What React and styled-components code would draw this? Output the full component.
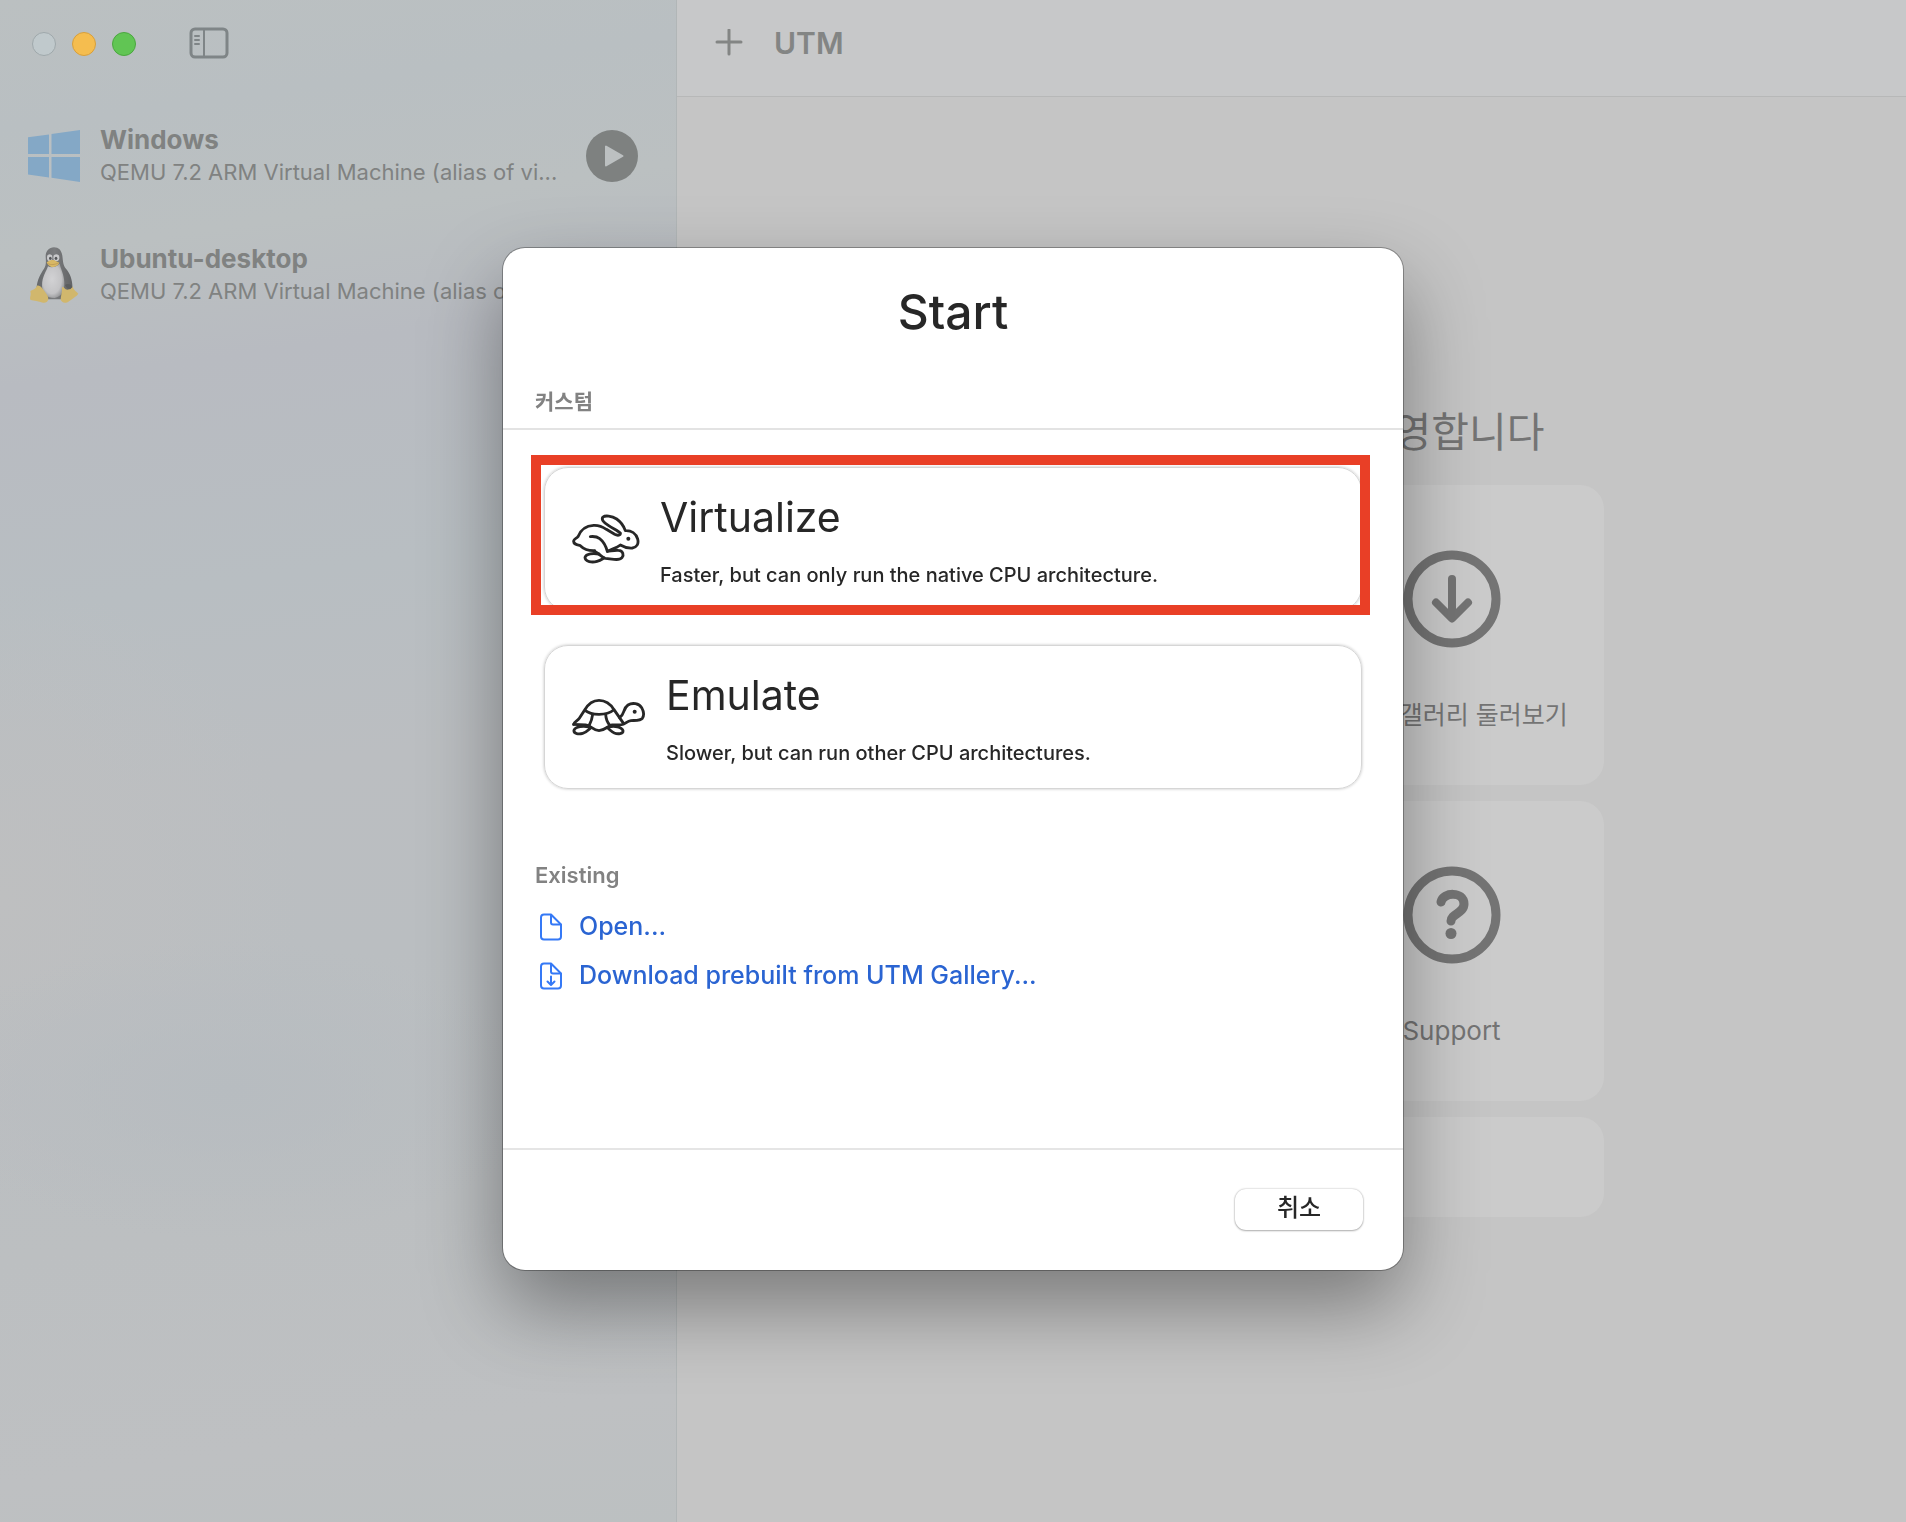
import React, { Component } from 'react';
import styled, { createGlobalStyle } from 'styled-components';


const GlobalStyle = createGlobalStyle`
    *{
        box-sizing: border-box;
        margin: 0;
        padding: 0;
    }
    body{
        font-family: Inter, "Noto Sans CJK KR", sans-serif;
        background-color: #c5c5c5;
    }
    button{
        font-family: inherit;
        border: none;
        background: none;
        cursor: pointer;
    }
    ul{
        list-style: none;
    }
    svg{
        display: block;
        flex-shrink: 0;
    }
`;

const StyledWindow = styled.div`
    display: flex;
    min-height: 100vh;
`;

const StyledSidebar = styled.aside`
    width: 677px;
    flex-shrink: 0;
    border-right: 1px solid #b1b6b7;
    background:
        radial-gradient(ellipse 320px 150px at 230px 1090px, #b7bcc0 0%, transparent 100%),
        radial-gradient(ellipse 300px 320px at 0 900px, #bebfc0 0%, transparent 100%),
        linear-gradient(172deg, #bbc0c1 0%, #b9bfc2 8%, #bbc0c1 16%, #b8bbc1 24%, #b8bec2 38%, #bbbec1 50%, #babec1 62%, #bcbfc1 78%, #bec0c2 92%, #bcc0c1 100%);
`;

const StyledTitleBar = styled.div`
    display: flex;
    align-items: center;
    height: 88px;
    padding: 0 32px;
    .lights{
        display: flex;
        gap: 16px;
        margin-right: 53px;
    }
`;

const Light = styled.button`
    width: 24px;
    height: 24px;
    border-radius: 50%;
    border: 1px solid ${({ $edge }) => $edge};
    background-color: ${({ $fill }) => $fill};
`;

const StyledMachines = styled.ul`
    display: flex;
    flex-direction: column;
    gap: 55px;
    padding: 36px 38px 36px 28px;
    li{
        display: flex;
        align-items: center;
        gap: 20px;
        color: #808281;
    }
    .logo{
        display: flex;
        justify-content: center;
        width: 52px;
        flex-shrink: 0;
    }
    .info{
        flex: 1;
        min-width: 0;
    }
    h3, p{
        line-height: 32px;
        white-space: nowrap;
    }
    h3{
        font-size: 26px;
        font-weight: 700;
    }
    p{
        font-size: 22px;
    }
`;

const StyledMain = styled.main`
    flex: 1;
    min-width: 0;
    display: flex;
    flex-direction: column;
    background-color: #c5c5c5;
`;

const StyledToolbar = styled.header`
    display: flex;
    align-items: center;
    gap: 31px;
    height: 97px;
    padding: 0 38px 11px;
    color: #838584;
    background-color: #c7c8c9;
    border-bottom: 1px solid #b7b8b8;
    h1{
        font-size: 30px;
        line-height: 36px;
        font-weight: 600;
    }
`;

const StyledWelcome = styled.section`
    flex: 1;
    display: flex;
    flex-direction: column;
    align-items: center;
    justify-content: center;
    color: #747474;
    h2{
        font-size: 41px;
        line-height: 60px;
        font-weight: 400;
        margin-bottom: 23px;
    }
    .tiles{
        display: grid;
        grid-template-columns: 304px 304px;
        gap: 16px;
    }
`;

const Tile = styled.div`
    grid-column: ${({ $wide }) => $wide ? "1 / -1" : "auto"};
    height: ${({ $wide }) => $wide ? "100px" : "300px"};
    display: flex;
    flex-direction: column;
    align-items: center;
    gap: 49px;
    padding-top: 65px;
    border-radius: 24px;
    background-color: #cbcbcb;
    button{
        font-size: ${({ $korean }) => $korean ? "25px" : "26px"};
        line-height: 36px;
        color: inherit;
    }
`;

const StyledBackdrop = styled.div`
    position: fixed;
    inset: 0;
    display: flex;
    align-items: flex-start;
    justify-content: center;
    padding-top: 248px;
`;

const StyledDialog = styled.div`
    width: 900px;
    max-width: 100%;
    color: #272727;
    background-color: #fff;
    border-radius: 22px;
    box-shadow: 0 0 0 1px rgba(0, 0, 0, 0.3), 0 36px 80px rgba(0, 0, 0, 0.38);
    h2{
        padding-top: 34px;
        font-size: 48px;
        line-height: 60px;
        font-weight: 500;
        text-align: center;
    }
    .custom{
        margin-top: 46px;
        padding: 0 32px 12px;
        border-bottom: 2px solid #e3e3e3;
    }
    .modes{
        display: flex;
        flex-direction: column;
        gap: 34px;
        padding: 37px 41px 36px;
    }
    .existing{
        padding: 36px 32px 148px;
    }
    .existing ul{
        margin-top: 13px;
    }
    footer{
        display: flex;
        justify-content: flex-end;
        padding: 39px 40px 40px;
        border-top: 2px solid #e5e5e5;
    }
`;

const SectionTitle = styled.h3`
    font-size: ${({ $korean }) => $korean ? "21px" : "22px"};
    line-height: 28px;
    font-weight: 600;
    color: #828282;
`;

const ModeCard = styled.button`
    position: relative;
    display: flex;
    align-items: center;
    gap: 20px;
    width: 100%;
    height: 144px;
    padding: 0 27px;
    border: 1px solid #d6d6d6;
    border-radius: 24px;
    box-shadow: 0 0 3px rgba(0, 0, 0, 0.25);
    color: inherit;
    text-align: left;
    strong, small{
        display: block;
    }
    strong{
        font-size: 41px;
        line-height: 54px;
        font-weight: 400;
        margin-bottom: 17px;
    }
    small{
        font-size: 20px;
        line-height: 28px;
        font-weight: 500;
    }
    &::after{
        content: "";
        display: ${({ $marked }) => $marked ? "block" : "none"};
        position: absolute;
        inset: -13px -9px -5px -14px;
        border: 10px solid #e93f26;
    }
`;

const ExistingLink = styled.a`
    display: flex;
    align-items: center;
    gap: 16px;
    padding-left: 4px;
    font-size: 25px;
    line-height: 49px;
    font-weight: 500;
    color: #2a64d2;
    text-decoration: none;
`;

const CancelButton = styled.button`
    width: 128px;
    height: 41px;
    padding-bottom: 4px;
    border-radius: 11px;
    font-size: 24px;
    line-height: 36px;
    font-weight: 500;
    color: #272727;
    background-color: #fff;
    box-shadow: 0 0 2px rgba(0, 0, 0, 0.3), 0 1px 2px rgba(0, 0, 0, 0.25);
`;

const SidebarIcon = () => (
    <svg width="40" height="34" viewBox="0 0 40 34" fill="none" stroke="#7f8587" strokeWidth="3" strokeLinecap="round">
        <rect x="2" y="2" width="36" height="28" rx="4" />
        <path d="M15 2V30" strokeWidth="2" />
        <path d="M6 9H10M6 13H10M6 17H10" strokeWidth="2" />
    </svg>
);

const PlusIcon = () => (
    <svg width="28" height="28" viewBox="0 0 28 28" fill="none" stroke="#838584" strokeWidth="3" strokeLinecap="round">
        <path d="M14 1V25M2 13H26" />
    </svg>
);

const WindowsLogo = () => (
    <svg width="52" height="52" viewBox="0 0 52 52" fill="#84a8c6">
        <path d="M0 7.2L21 4.4V24H0zM23.5 4L52 0V24H23.5zM0 27H21V47.4L0 44.6zM23.5 27H52V52L23.5 47.8z" />
    </svg>
);

const TuxLogo = () => (
    <svg width="50" height="57" viewBox="27 50 150 171">
        <defs>
            <radialGradient id="belly" cx="45%" cy="45%" r="60%">
                <stop offset="0" stopColor="#d2d2d4" />
                <stop offset="0.7" stopColor="#c3c3c5" />
                <stop offset="1" stopColor="#929395" />
            </radialGradient>
            <linearGradient id="coat" x1="0" y1="0" x2="1" y2="0">
                <stop offset="0" stopColor="#66686a" />
                <stop offset="0.5" stopColor="#7a7c7e" />
                <stop offset="1" stopColor="#626365" />
            </linearGradient>
        </defs>
        <path fill="url(#coat)" d="M102 51C87 51 77 62 77 78C78 95 79 103 72 115C61 132 52 148 50 170L68 207H132L157 178C159 151 151 131 138 115C129 105 129 91 127 76C124 59 116 51 102 51Z" />
        <path fill="url(#belly)" d="M84 108C94 114 109 110 119 100C122 116 132 131 133 156C134 183 124 200 104 203C80 203 67 189 66 166C66 139 79 124 84 108Z" />
        <ellipse cx="89" cy="82" rx="8" ry="10" fill="#c8c9cb" />
        <ellipse cx="109" cy="82" rx="9" ry="10" fill="#c8c9cb" />
        <ellipse cx="91" cy="84" rx="4" ry="5" fill="#55575a" />
        <ellipse cx="108" cy="84" rx="4" ry="5" fill="#55575a" />
        <path fill="#d8b865" d="M80 96C88 89 96 87 103 90L118 97C116 105 102 112 94 110C87 107 82 103 80 96Z" />
        <path fill="none" stroke="#b69351" strokeWidth="2" d="M82 99C94 105 103 103 116 98" />
        <path fill="#d1b76d" d="M51 166C61 163 70 178 79 190C90 204 85 219 69 217C55 214 42 210 32 209C27 203 35 193 31 184C32 177 45 181 51 166Z" />
        <path fill="#d1b76d" d="M126 171C133 165 132 182 148 177C155 176 153 169 158 169C162 181 172 185 175 190C170 199 157 204 147 213C137 221 124 218 122 207C123 194 127 183 126 171Z" />
        <path fill="#5b5d5f" d="M135 164C143 158 154 161 157 171C149 179 141 177 135 164Z" />
    </svg>
);

const PlayIcon = () => (
    <svg width="52" height="52" viewBox="0 0 52 52">
        <circle cx="26" cy="26" r="26" fill="#7e8180" />
        <path d="M20 16.5V35.5L36.5 26z" fill="#bcc0c1" stroke="#bcc0c1" strokeWidth="2" strokeLinejoin="round" />
    </svg>
);

const DownloadCircle = () => (
    <svg width="98" height="98" viewBox="0 0 98 98" fill="none" stroke="#747474" strokeWidth="9" strokeLinecap="round" strokeLinejoin="round">
        <circle cx="49" cy="49" r="44" />
        <path d="M49 29V68M33 52.5L49 68.5L65 52.5" strokeWidth="8" />
    </svg>
);

const HelpCircle = () => (
    <svg width="98" height="98" viewBox="0 0 98 98" fill="none" stroke="#747474" strokeWidth="9" strokeLinecap="round" strokeLinejoin="round">
        <circle cx="49" cy="49" r="44" />
        <path d="M38 36C40 26 61 25 61 38C61 47 48 48 48 55" />
        <circle cx="48" cy="67.5" r="5.5" fill="#747474" stroke="none" />
    </svg>
);

const RabbitIcon = () => (
    <svg width="68" height="50" viewBox="62 72 204 150" fill="none" stroke="#272727" strokeWidth="8.5" strokeLinecap="round" strokeLinejoin="round">
        <path d="M130 182C112 183 98 178 87 167C76 164 66 162 67 153C68 146 75 146 80 140C88 119 105 107 127 106C144 105 155 111 165 118L190 133C199 138 209 136 207 129C201 124 186 116 172 107C156 97 149 88 155 81C161 76 181 77 196 87C210 97 218 110 222 122C240 121 254 131 259 147C263 162 256 172 243 174C229 175 217 171 207 165C196 174 183 176 168 184C164 170 157 155 145 146C136 139 126 139 117 140" />
        <path d="M168 184C179 183 190 180 201 181C216 182 218 196 212 203C206 210 197 209 188 208L162 205C151 203 143 190 130 184" />
        <path d="M143 192C127 189 104 190 101 202C101 216 123 218 137 214C147 211 151 208 158 204" />
        <circle cx="231" cy="146" r="6" fill="#272727" stroke="none" />
    </svg>
);

const TurtleIcon = () => (
    <svg width="74" height="38" viewBox="62 84 222 114" fill="none" stroke="#272727" strokeWidth="8.5" strokeLinecap="round" strokeLinejoin="round">
        <path d="M67 163C68 156 79 153 84 145L100 120C111 101 126 91 143 91C160 91 177 101 188 119L217 161" />
        <path d="M101 121C121 137 166 137 187 120" />
        <path d="M124 133C122 148 119 156 114 165M163 133C164 148 168 157 175 165" />
        <path d="M67 163L103 165C119 166 124 181 143 182C162 181 168 168 182 165L211 164C224 162 226 153 239 152C253 151 268 152 273 145C279 136 276 122 271 113C263 100 243 97 230 105C214 116 221 132 205 143" />
        <path d="M112 171C96 166 72 170 68 181C66 192 83 193 94 190C106 187 112 178 119 173" />
        <path d="M173 171C188 166 212 171 215 182C217 192 199 193 189 189C180 185 175 178 167 173" />
        <circle cx="250" cy="125" r="6" fill="#272727" stroke="none" />
    </svg>
);

const FileIcon = ({ arrow }) => (
    <svg width="24" height="28" viewBox="0 0 24 28" fill="none" stroke="#3579f6" strokeWidth="2" strokeLinecap="round" strokeLinejoin="round">
        <path d="M5 1.5H12L22 11.5V23.5Q22 26.5 19 26.5H5Q2 26.5 2 23.5V4.5Q2 1.5 5 1.5Z" />
        <path d="M12 2V9.5Q12 11.5 14 11.5H21.5" />
        {arrow ? <path d="M12 14.5V22.5M8.5 19.5L12 23L15.5 19.5" /> : ""}
    </svg>
);

const lights = [
    { name: "Close", fill: "#c0c9cc", edge: "#9fa8ab" },
    { name: "Minimize", fill: "#f5bd4f", edge: "#d79f3c" },
    { name: "Zoom", fill: "#61c554", edge: "#4ba73f" }
];

const machines = [
    { name: "Windows", logo: <WindowsLogo />, system: "QEMU 7.2 ARM Virtual Machine (alias of vi..." },
    { name: "Ubuntu-desktop", logo: <TuxLogo />, system: "QEMU 7.2 ARM Virtual Machine (alias of vi..." }
];

const modes = [
    { name: "Virtualize", icon: <RabbitIcon />, text: "Faster, but can only run the native CPU architecture.", marked: true },
    { name: "Emulate", icon: <TurtleIcon />, text: "Slower, but can run other CPU architectures.", marked: false }
];

class Sidebar extends Component {
    render() {
        return (
            <StyledSidebar>
                <StyledTitleBar>
                    <div className='lights'>
                        {lights.map(light => (
                            <Light key={light.name} aria-label={light.name} $fill={light.fill} $edge={light.edge} />
                        ))}
                    </div>
                    <button aria-label='Toggle sidebar'><SidebarIcon /></button>
                </StyledTitleBar>
                <StyledMachines>
                    {machines.map(machine => (
                        <li key={machine.name}>
                            <div className='logo'>{machine.logo}</div>
                            <div className='info'>
                                <h3>{machine.name}</h3>
                                <p>{machine.system}</p>
                            </div>
                            <button aria-label={"Run " + machine.name}><PlayIcon /></button>
                        </li>
                    ))}
                </StyledMachines>
            </StyledSidebar>
        );
    }
}

class Welcome extends Component {
    render() {
        return (
            <StyledMain>
                <StyledToolbar>
                    <button aria-label='New virtual machine'><PlusIcon /></button>
                    <h1>UTM</h1>
                </StyledToolbar>
                <StyledWelcome>
                    <h2>UTM에 오신 것을 환영합니다</h2>
                    <div className='tiles'>
                        <Tile />
                        <Tile $korean>
                            <DownloadCircle />
                            <button>UTM 갤러리 둘러보기</button>
                        </Tile>
                        <Tile />
                        <Tile>
                            <HelpCircle />
                            <button>Support</button>
                        </Tile>
                        <Tile $wide />
                    </div>
                </StyledWelcome>
            </StyledMain>
        );
    }
}

class StartDialog extends Component {
    render() {
        return (
            <StyledBackdrop>
                <StyledDialog role='dialog' aria-labelledby='start-title'>
                    <h2 id='start-title'>Start</h2>
                    <div className='custom'>
                        <SectionTitle $korean>커스텀</SectionTitle>
                    </div>
                    <div className='modes'>
                        {modes.map(mode => (
                            <ModeCard key={mode.name} $marked={mode.marked}>
                                {mode.icon}
                                <span>
                                    <strong>{mode.name}</strong>
                                    <small>{mode.text}</small>
                                </span>
                            </ModeCard>
                        ))}
                    </div>
                    <div className='existing'>
                        <SectionTitle>Existing</SectionTitle>
                        <ul>
                            <li><ExistingLink href='#open'><FileIcon />Open...</ExistingLink></li>
                            <li><ExistingLink href='#gallery'><FileIcon arrow />Download prebuilt from UTM Gallery...</ExistingLink></li>
                        </ul>
                    </div>
                    <footer>
                        <CancelButton>취소</CancelButton>
                    </footer>
                </StyledDialog>
            </StyledBackdrop>
        );
    }
}

class App extends Component {
    render() {
        return (
            <>
                <GlobalStyle />
                <StyledWindow>
                    <Sidebar />
                    <Welcome />
                </StyledWindow>
                <StartDialog />
            </>
        );
    }
}

export default App;
